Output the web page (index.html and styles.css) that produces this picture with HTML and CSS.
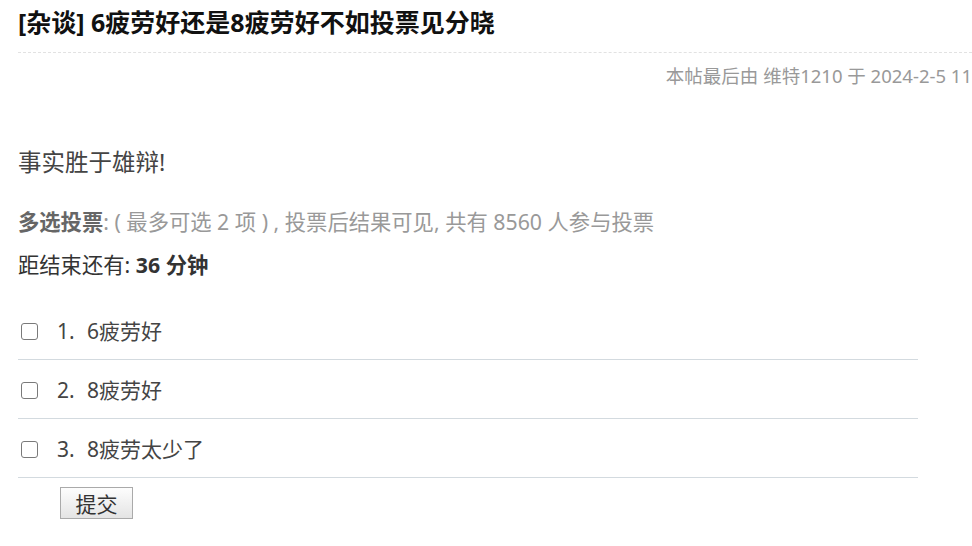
FILE: index.html
```html
<!DOCTYPE html>
<html lang="zh-CN">
<head>
    <meta charset="UTF-8">
    <meta name="viewport" content="width=device-width, initial-scale=1.0">
    <title>[杂谈] 6疲劳好还是8疲劳好不如投票见分晓</title>
    <link rel="stylesheet" href="styles.css">
</head>
<body>
    <div id="post">
        <h1 class="post-title">[杂谈] 6疲劳好还是8疲劳好不如投票见分晓</h1>
        <div class="edit-note">本帖最后由 维特1210 于 2024-2-5 11</div>

        <p class="post-text">事实胜于雄辩!</p>

        <!-- poll block -->
        <div class="poll-info"><strong>多选投票</strong>: ( 最多可选 2 项 ) , 投票后结果可见, 共有 8560 人参与投票</div>
        <div class="poll-time">距结束还有: <strong>36 分钟</strong></div>

        <form class="poll-form">
            <label class="poll-option">
                <span class="opt-box"><input type="checkbox" name="pollanswers" value="1"></span>
                <span class="opt-num">1.</span>
                <span class="opt-text">6疲劳好</span>
            </label>
            <label class="poll-option">
                <span class="opt-box"><input type="checkbox" name="pollanswers" value="2"></span>
                <span class="opt-num">2.</span>
                <span class="opt-text">8疲劳好</span>
            </label>
            <label class="poll-option">
                <span class="opt-box"><input type="checkbox" name="pollanswers" value="3"></span>
                <span class="opt-num">3.</span>
                <span class="opt-text">8疲劳太少了</span>
            </label>
            <button type="button" class="poll-submit">提交</button>
        </form>
    </div>
</body>
</html>
```

FILE: styles.css
```css
body {
    margin: 0;
    background-color: #fff;
    font-family: "Noto Sans", "Noto Sans CJK SC", sans-serif;
    color: #444;
    overflow: hidden;
}

#post {
    width: 954px;
    padding-left: 18px;
}

.post-title {
    margin: 0;
    padding-bottom: 8px;
    border-bottom: 1px dashed #e2e2e2;
    font-size: 25px;
    line-height: 44px;
    font-weight: bold;
    color: #111;
}

.edit-note {
    margin-top: 8px;
    text-align: right;
    font-size: 18.5px;
    line-height: 30px;
    color: #999;
    white-space: nowrap;
}

.post-text {
    margin: 55px 0 0;
    font-size: 23.5px;
    line-height: 32px;
    color: #444;
}

.poll-info {
    margin-top: 28px;
    font-size: 21.3px;
    line-height: 32px;
    color: #999;
}

.poll-info strong {
    color: #666;
}

.poll-time {
    margin-top: 11px;
    font-size: 21.3px;
    line-height: 32px;
    color: #333;
}

.poll-form {
    margin-top: 20px;
    width: 900px;
}

.poll-option {
    display: flex;
    align-items: center;
    padding: 15px 0 13px;
    border-bottom: 1px solid #d3dadf;
    font-size: 21px;
    line-height: 30px;
    color: #444;
}

.opt-box {
    display: flex;
    margin: 1px 19px 0 3px;
}

.opt-box input {
    appearance: none;
    -webkit-appearance: none;
    display: block;
    width: 17px;
    height: 17px;
    margin: 0;
    border: 1.5px solid #7a7a7a;
    border-radius: 3px;
    background-color: #fff;
    box-sizing: border-box;
}

.opt-num {
    width: 30px;
}

.poll-submit {
    display: block;
    margin: 9px 0 0 42px;
    width: 73px;
    height: 32px;
    padding: 0;
    border: 1px solid #aaa;
    border-radius: 0;
    background: linear-gradient(#fdfdfd, #e4e4e4);
    font-family: "Noto Sans CJK SC", sans-serif;
    font-size: 21px;
    color: #333;
}
```
